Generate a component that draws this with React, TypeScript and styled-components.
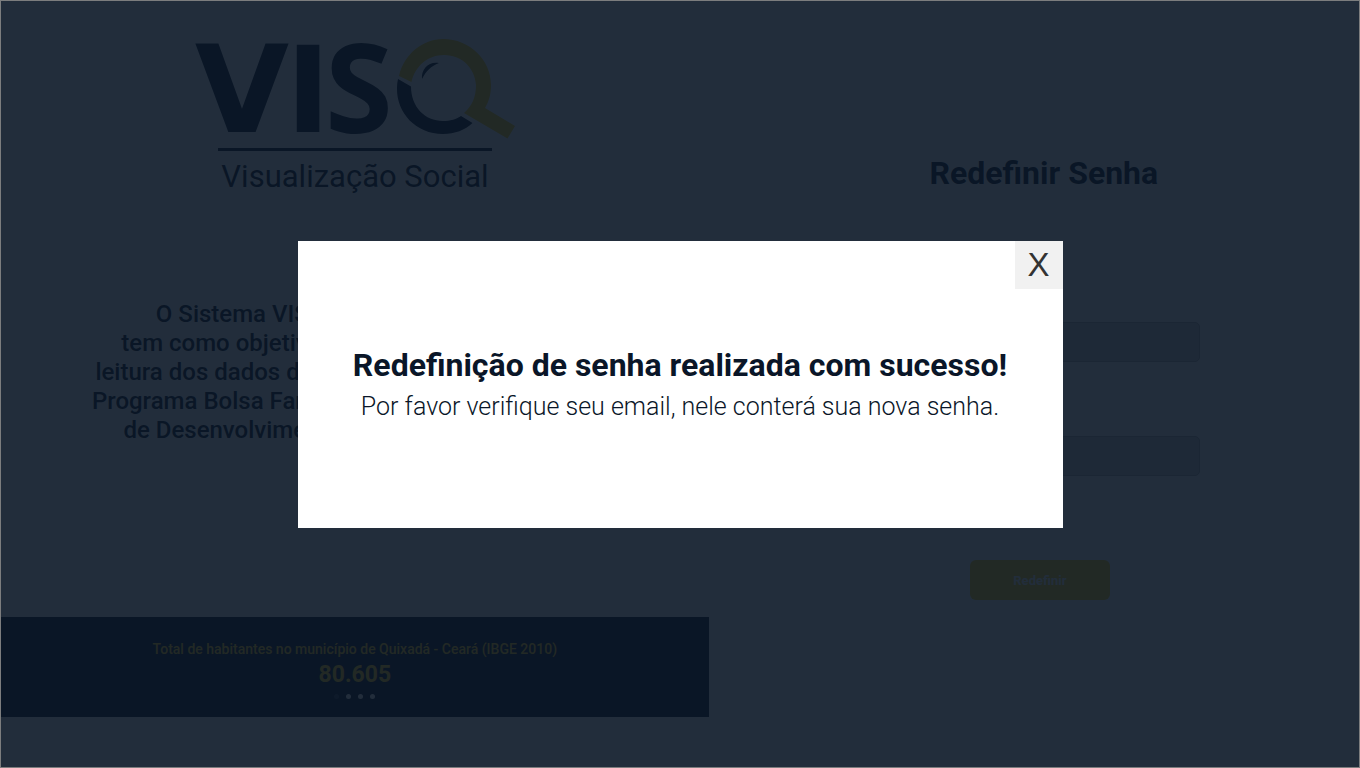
import React from "react";
import styled, { createGlobalStyle } from "styled-components";

const navy = "#0a1628";
const gold = "#ffd21e";

const GlobalStyle = createGlobalStyle`
  *, *::before, *::after { box-sizing: border-box; }
  body {
    margin: 0;
    background: #fff;
    color: ${navy};
    font-family: Roboto, "Liberation Sans", sans-serif;
  }
  h1, h2, p, ul { margin: 0; padding: 0; }
`;

const Page = styled.div`
  display: grid;
  grid-template-columns: 37fr 34fr;
  min-height: 100vh;
  padding: 1px;
`;

const About = styled.section`
  display: flex;
  flex-direction: column;
  align-items: center;
  padding-bottom: 50px;
`;

const Logo = styled.svg`
  width: 340px;
  max-width: 100%;
  height: 200px;
`;

const Intro = styled.p`
  margin-top: 99px;
  font-size: 24px;
  line-height: 29px;
  font-weight: 500;
  text-align: center;
  white-space: pre-line;
`;

const Stats = styled.aside`
  display: flex;
  flex-direction: column;
  align-items: center;
  align-self: stretch;
  height: 100px;
  margin-top: auto;
  padding-top: 22px;
  background: ${navy};
  color: ${gold};
`;

const StatLabel = styled.p`
  font-size: 14px;
  line-height: 20px;
  font-weight: 500;
`;

const StatValue = styled.p`
  font-size: 23px;
  line-height: 32px;
  font-weight: 700;
`;

const Dots = styled.ul`
  display: flex;
  gap: 7px;
  margin-top: 3px;
  list-style: none;
`;

const Dot = styled.li<{ $active?: boolean }>`
  width: 5px;
  height: 5px;
  border-radius: 50%;
  background: #fff;
  opacity: ${(p) => (p.$active ? 0.2 : 1)};
`;

const Reset = styled.form`
  display: flex;
  flex-direction: column;
  align-items: center;
  padding: 152px 0 50px 20px;
`;

const Title = styled.h1`
  font-size: 32px;
  line-height: 40px;
  font-weight: 700;
`;

const FormBody = styled.div`
  display: flex;
  flex-direction: column;
  align-items: center;
  align-self: stretch;
  gap: 84px;
  margin-top: 99px;
  padding-right: 8px;
`;

const Fields = styled.div`
  display: flex;
  flex-direction: column;
  gap: 44px;
  width: 320px;
  max-width: 100%;
`;

const Field = styled.div`
  display: flex;
  flex-direction: column;
  gap: 6px;

  label {
    font-size: 16px;
    line-height: 24px;
  }

  input {
    width: 100%;
    height: 40px;
    padding: 0 12px;
    border: 1px solid #b4b4b4;
    border-radius: 5px;
    background: #d4d4d4;
    font: inherit;
  }
`;

const SubmitButton = styled.button`
  width: 140px;
  height: 40px;
  border: 0;
  border-radius: 6px;
  background: ${gold};
  color: #fff;
  font-family: inherit;
  font-size: 13px;
  font-weight: 700;
`;

const Overlay = styled.div`
  position: fixed;
  inset: 0;
  display: flex;
  align-items: center;
  justify-content: center;
  border: 1px solid #7c7d7e;
  background: rgba(10, 22, 38, 0.9);
  background-clip: padding-box;
`;

const Dialog = styled.div`
  position: relative;
  display: flex;
  flex-direction: column;
  align-items: center;
  justify-content: center;
  width: 765px;
  max-width: 100%;
  min-height: 287px;
  padding: 48px;
  background: #fff;
  text-align: center;
`;

const CloseButton = styled.button`
  position: absolute;
  top: 0;
  right: 0;
  width: 48px;
  height: 48px;
  padding: 0;
  border: 0;
  background: #f1f1f1;
  color: #333;
  font-family: "Liberation Sans", sans-serif;
  font-size: 33px;
  line-height: 48px;
`;

const DialogTitle = styled.h2`
  font-size: 32px;
  line-height: 40px;
  font-weight: 700;
`;

const DialogText = styled.p`
  margin-top: 6px;
  font-size: 25px;
  line-height: 32px;
  font-weight: 300;
`;

const introText = `O Sistema VISO - Visualização Social
tem como objetivo facilitar as consultas e a
leitura dos dados disponibilizados pelo Governo,
Programa Bolsa Família e pelo Ministério Federal
de Desenvolvimento Social do Brasil (MDS)`;

function VisoLogo() {
  return (
    <Logo viewBox="185 1 340 200" role="img" aria-label="VISO Visualização Social">
      <g fill={navy}>
        <g fontWeight="700" fontSize="120" fontFamily='"DejaVu Sans", sans-serif'>
          <text x="242" y="132" textAnchor="middle" fontSize="122">V</text>
          <text x="308" y="132" textAnchor="middle">I</text>
          <text x="359" y="133" textAnchor="middle" fontFamily='"Noto Sans", sans-serif'>
            <tspan fontSize="123">S</tspan>
          </text>
        </g>
        <path d="M398 79 L411 86.500 C411 107 425 121 443 121 C450 121 457 119 461 116 L472.500 123 C465 130 455 134 443 134 C416 134 396.500 113 397 88 C397 85 397.300 82 398 79 Z" />
        <path d="M422 79 C421 69 429 61 439 63 C431 66 426 71 422 79 Z" />
        <rect x="218" y="148" width="274" height="3" />
        <text x="355" y="187" textAnchor="middle" fontSize="31" fontFamily="Roboto, sans-serif">
          Visualização Social
        </text>
      </g>
      <path
        fill={gold}
        d="M399 76 C404 54 423 39 443 39 C470 39 491 60 491 85 C491 94 489 101 485 108 L515 126 L507.500 138.500 L464 113 C472 106 476 97 476 85 C475 69 463 55 444 55 C428 55 415 66 411.500 82 Z"
      />
    </Logo>
  );
}

export default function App() {
  return (
    <>
      <GlobalStyle />
      <Page>
        <About>
          <VisoLogo />
          <Intro>{introText}</Intro>
          <Stats>
            <StatLabel>Total de habitantes no município de Quixadá - Ceará (IBGE 2010)</StatLabel>
            <StatValue>80.605</StatValue>
            <Dots>
              <Dot $active />
              <Dot />
              <Dot />
              <Dot />
            </Dots>
          </Stats>
        </About>
        <Reset>
          <Title>Redefinir Senha</Title>
          <FormBody>
            <Fields>
              <Field>
                <label htmlFor="cpf">CPF</label>
                <input id="cpf" type="text" />
              </Field>
              <Field>
                <label htmlFor="email">Email</label>
                <input id="email" type="email" />
              </Field>
            </Fields>
            <SubmitButton type="button">Redefinir</SubmitButton>
          </FormBody>
        </Reset>
      </Page>
      <Overlay>
        <Dialog role="dialog" aria-modal="true" aria-labelledby="dialog-title">
          <CloseButton type="button" aria-label="Fechar">X</CloseButton>
          <DialogTitle id="dialog-title">Redefinição de senha realizada com sucesso!</DialogTitle>
          <DialogText>Por favor verifique seu email, nele conterá sua nova senha.</DialogText>
        </Dialog>
      </Overlay>
    </>
  );
}
